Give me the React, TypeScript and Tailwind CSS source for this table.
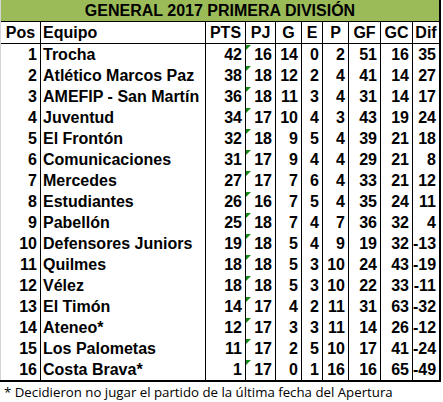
import React from 'react'

type Row = [number, string, number, number, number, number, number, number, number, number]

const ROWS: Row[] = [
  [1, 'Trocha', 42, 16, 14, 0, 2, 51, 16, 35],
  [2, 'Atlético Marcos Paz', 38, 18, 12, 2, 4, 41, 14, 27],
  [3, 'AMEFIP - San Martín', 36, 18, 11, 3, 4, 31, 14, 17],
  [4, 'Juventud', 34, 17, 10, 4, 3, 43, 19, 24],
  [5, 'El Frontón', 32, 18, 9, 5, 4, 39, 21, 18],
  [6, 'Comunicaciones', 31, 17, 9, 4, 4, 29, 21, 8],
  [7, 'Mercedes', 27, 17, 7, 6, 4, 33, 21, 12],
  [8, 'Estudiantes', 26, 16, 7, 5, 4, 35, 24, 11],
  [9, 'Pabellón', 25, 18, 7, 4, 7, 36, 32, 4],
  [10, 'Defensores Juniors', 19, 18, 5, 4, 9, 19, 32, -13],
  [11, 'Quilmes', 18, 18, 5, 3, 10, 24, 43, -19],
  [12, 'Vélez', 18, 18, 5, 3, 10, 22, 33, -11],
  [13, 'El Timón', 14, 17, 4, 2, 11, 31, 63, -32],
  [14, 'Ateneo*', 12, 17, 3, 3, 11, 14, 26, -12],
  [15, 'Los Palometas', 11, 17, 2, 5, 10, 17, 41, -24],
  [16, 'Costa Brava*', 1, 17, 0, 1, 16, 16, 65, -49],
]

const HEADERS = ['Pos', 'Equipo', 'PTS', 'PJ', 'G', 'E', 'P', 'GF', 'GC', 'Dif']

const GRID = 'grid grid-cols-[40px_165px_40px_30px_26px_21px_26px_32px_32px_26px]'

export default function App() {
  return (
    <div className="w-[443px] h-[402px] bg-white text-black font-['Liberation_Sans',Arial,sans-serif] overflow-hidden">
      <div className="w-[441px] border-l border-l-[#d4d4d4] border-r-2 border-r-black">
        {/* Title */}
        <div className="h-[22px] bg-[#9bbb59] border-b border-black text-[16px] leading-[21px] font-bold text-center">
          GENERAL 2017 PRIMERA DIVISIÓN
        </div>

        {/* Column headers */}
        <div className={`${GRID} h-[22px] border-b border-black text-[16px] leading-[21px] font-bold`}>
          {HEADERS.map((h, i) => (
            <div
              key={h}
              className={`${i < 9 ? 'border-r border-black' : ''} ${i === 1 ? 'text-left pl-[2px]' : 'text-center'}`}
            >
              {h}
            </div>
          ))}
        </div>

        {/* Data rows */}
        {ROWS.map(r => (
          <div key={r[0]} className={`${GRID} h-[21px] text-[16px] leading-[21px] font-bold`}>
            {r.map((v, i) => (
              <div
                key={i}
                className={`relative ${i < 9 ? 'border-r border-black' : ''} ${i === 1 ? 'text-left pl-[2px] whitespace-nowrap' : 'text-right pr-[3px]'}`}
              >
                {i === 3 && (
                  <span className="absolute left-0 top-[1px] w-0 h-0 border-t-[5px] border-r-[5px] border-t-[#168a16] border-r-transparent" />
                )}
                {v}
              </div>
            ))}
          </div>
        ))}
      </div>

      {/* Footer */}
      <div className="w-[441px] border-t-2 border-black pl-[4px] pt-[1px] text-[13.25px] leading-[18px] font-['Open_Sans',sans-serif]">
        * Decidieron no jugar el partido de la última fecha del Apertura
      </div>
    </div>
  )
}
